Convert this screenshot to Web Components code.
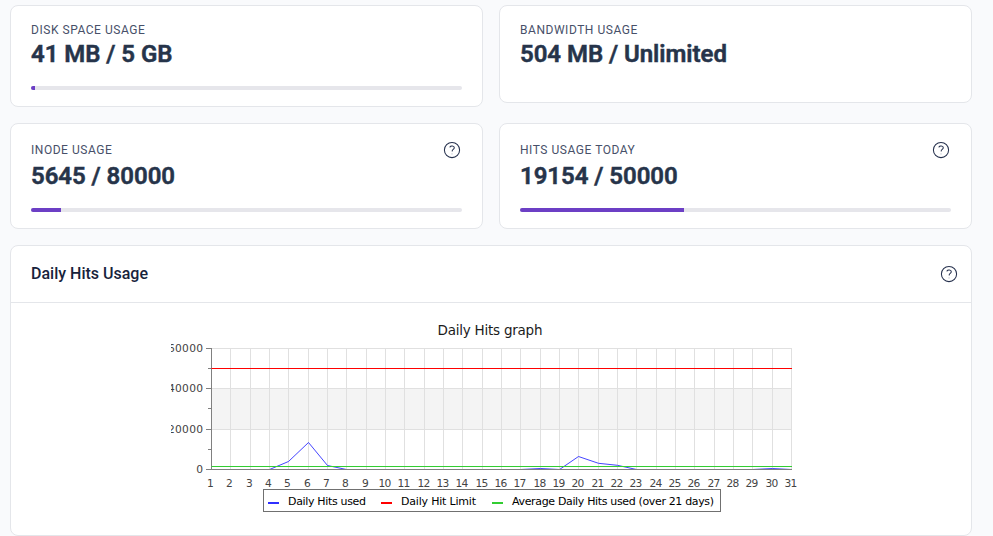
<!DOCTYPE html>
<html lang="en">
<head>
<meta charset="utf-8">
<title>Usage statistics</title>
<style>
  body {
    margin: 0;
    background: #f9fafc;
    font-family: Roboto, "Liberation Sans", sans-serif;
    color: #26344a;
  }
</style>
</head>
<body>
<usage-dashboard>
  <usage-card label="Disk space usage" value="41 MB / 5 GB" percent="0.95"></usage-card>
  <usage-card label="Bandwidth usage" value="504 MB / Unlimited"></usage-card>
  <usage-card label="Inode usage" value="5645 / 80000" percent="7.05" help></usage-card>
  <usage-card label="Hits usage today" value="19154 / 50000" percent="38.1" help></usage-card>
  <chart-panel slot="chart">
    <span slot="title">Daily Hits Usage</span>
    <hits-chart></hits-chart>
  </chart-panel>
</usage-dashboard>

<script>
(() => {
class UsageDashboard extends HTMLElement {
  constructor() {
    super();
    this.attachShadow({ mode: "open" }).innerHTML = `
      <style>
        :host {
          display: flex;
          flex-direction: column;
          gap: 16px;
          box-sizing: border-box;
          width: 982px;
          padding: 5px 10px 0;
        }

        .cards {
          display: grid;
          grid-template-columns: 1fr 1fr;
          align-items: start;
          gap: 16px;
        }
      </style>
      <div class="cards"><slot></slot></div>
      <slot name="chart"></slot>
    `;
  }
}

// Round question mark shown beside a metric or a panel title
class HelpIcon extends HTMLElement {
  constructor() {
    super();
    this.attachShadow({ mode: "open" }).innerHTML = `
      <style>
        :host { display: block; width: 18px; height: 18px; color: #25304d; }
        svg { display: block; }
      </style>
      <svg width="18" height="18" viewBox="0 0 18 18" fill="none" stroke="currentColor" stroke-linecap="round" stroke-linejoin="round">
        <circle cx="9" cy="9" r="7.6" stroke-width="1.05"></circle>
        <path d="M7 6C7.5 4.6 11.3 4.4 11.3 6.7C11.3 8.3 9.2 8.3 9.2 9.9" stroke-width="1.05"></path>
        <path d="M9 12.9v.1" stroke-width="0.9" opacity=".45"></path>
      </svg>
    `;
  }
}

class UsageCard extends HTMLElement {
  constructor() {
    super();
    this.attachShadow({ mode: "open" });
  }

  connectedCallback() {
    const percent = this.getAttribute("percent");
    const help = this.hasAttribute("help");

    this.shadowRoot.innerHTML = `
      <style>
        :host {
          display: block;
          box-sizing: border-box;
          height: ${help ? 106 : percent ? 102 : 98}px;
          padding: 16px 20px;
          background: #fff;
          border: 1px solid #e4e6ea;
          border-radius: 8px;
        }

        .head {
          display: flex;
          justify-content: space-between;
          align-items: center;
          height: ${help ? 20 : 16}px;
        }

        .label {
          font-size: 12px;
          line-height: 16px;
          letter-spacing: 0.54px;
          text-transform: uppercase;
          color: #475069;
        }

        help-icon { margin-right: 1px; }

        .value {
          font-size: 24px;
          font-weight: 600;
          line-height: 32px;
          letter-spacing: -0.04px;
          white-space: nowrap;
          -webkit-text-stroke: 0.5px currentColor;
        }

        .track {
          height: 4px;
          margin-top: 16px;
          border-radius: 2px;
          background: #e6e6eb;
          overflow: hidden;
        }

        .bar {
          width: ${percent}%;
          height: 100%;
          background: #6c3fc5;
        }
      </style>
      <div class="head">
        <span class="label">${this.getAttribute("label")}</span>
        ${help ? "<help-icon></help-icon>" : ""}
      </div>
      <div class="value">${this.getAttribute("value")}</div>
      ${percent ? '<div class="track"><div class="bar"></div></div>' : ""}
    `;
  }
}

class ChartPanel extends HTMLElement {
  constructor() {
    super();
    this.attachShadow({ mode: "open" }).innerHTML = `
      <style>
        :host {
          display: block;
          box-sizing: border-box;
          height: 291px;
          background: #fff;
          border: 1px solid #e4e6ea;
          border-radius: 8px;
        }

        header {
          display: flex;
          justify-content: space-between;
          align-items: center;
          box-sizing: border-box;
          height: 57px;
          padding: 0 13px 0 20px;
          border-bottom: 1px solid #e4e6ea;
          font-size: 16px;
          font-weight: 500;
          color: #17233c;
        }

        .title { padding-bottom: 2px; }

        .body {
          display: flex;
          justify-content: center;
          padding: 16px 0;
        }
      </style>
      <header><div class="title"><slot name="title"></slot></div><help-icon></help-icon></header>
      <div class="body"><slot></slot></div>
    `;
  }
}

class HitsChart extends HTMLElement {
  constructor() {
    super();
    this.attachShadow({ mode: "open" });
  }

  connectedCallback() {
    const left = 40.5;
    const right = 621;
    const base = 150.5;
    const x = (day) => Math.round(40 + (day - 1) * 580 / 30) + 0.5;
    const line = (x1, y1, x2, y2, color) =>
      `<line x1="${x1}" y1="${y1}" x2="${x2}" y2="${y2}" stroke="${color}"></line>`;

    let grid = "";
    let labels = "";
    for (let day = 1; day <= 31; day++) {
      if (day > 1) grid += line(x(day), 29, x(day), 150, "#e0e0e0");
      const spread = day > 9 ? 'textLength="13"' : "";
      labels += `<text x="${x(day) - (day > 9 ? 0.6 : 1)}" y="168" text-anchor="middle" ${spread}>${day}</text>`;
    }

    // Y axis: labels with long ticks, short ticks in between
    let axis = "";
    [[60000, 29.5], [40000, 69.5], [20000, 110.5], [0, base]].forEach(([label, y]) => {
      const spread = label ? 'textLength="35"' : "";
      if (label) grid += line(left, y, right, y, "#e0e0e0");
      axis += line(35, y, 40, y, "#808080");
      labels += `<text x="32" y="${y + 3.5}" text-anchor="end" ${spread}>${label}</text>`;
    });
    [49.5, 89.5, 130.5].forEach((y) => {
      axis += line(37, y, 40, y, "#808080");
    });

    const hits = [
      [1, base], [4, base], [5, 142.5], [6, 123.5], [7, 146.5], [8, base],
      [17, base], [18, 149.5], [19, base], [20, 137.5], [21, 144.3], [22, 146.3],
      [23, base], [29, base], [30, 149.5], [31, base]
    ];
    const points = hits.map(([day, y]) => `${x(day)},${y}`).join(" ");

    this.shadowRoot.innerHTML = `
      <style>
        :host { display: block; width: 640px; height: 200px; }

        svg {
          display: block;
          overflow: hidden;
          font-family: "DejaVu Sans", sans-serif;
          font-size: 11px;
        }

        .labels { font-size: 10.67px; fill: #444; }
        .heading { font-size: 13.5px; fill: #1c1c1c; }
      </style>
      <svg width="640" height="200" viewBox="0 0 640 200">
        <text class="heading" x="319" y="16" text-anchor="middle" textLength="105">Daily Hits graph</text>
        <rect x="41" y="70" width="580" height="40" fill="#f4f4f4"></rect>
        ${grid}
        <polyline points="${points}" fill="none" stroke="#3030ff" stroke-width="0.9"></polyline>
        ${axis}
        ${line(left, 29, left, 151, "#808080")}
        ${line(left, base, right, base, "#808080")}
        ${line(left, 147.5, right, 147.5, "#32cd32")}
        ${line(left, 49.5, right, 49.5, "#ff0000")}
        <g class="labels">${labels}</g>
        <rect x="92.5" y="170.5" width="457" height="22" fill="#fff" stroke="#707070"></rect>
        <rect x="97" y="183" width="11" height="2" fill="#3030ff"></rect>
        <text x="117" y="186" textLength="78">Daily Hits used</text>
        <rect x="210" y="183" width="11" height="2" fill="#ff0000"></rect>
        <text x="230" y="186" textLength="75">Daily Hit Limit</text>
        <rect x="321" y="183" width="11" height="2" fill="#32cd32"></rect>
        <text x="341" y="186" textLength="202">Average Daily Hits used (over 21 days)</text>
      </svg>
    `;
  }
}

customElements.define("help-icon", HelpIcon);
customElements.define("usage-dashboard", UsageDashboard);
customElements.define("usage-card", UsageCard);
customElements.define("chart-panel", ChartPanel);
customElements.define("hits-chart", HitsChart);
})();
</script>
</body>
</html>
